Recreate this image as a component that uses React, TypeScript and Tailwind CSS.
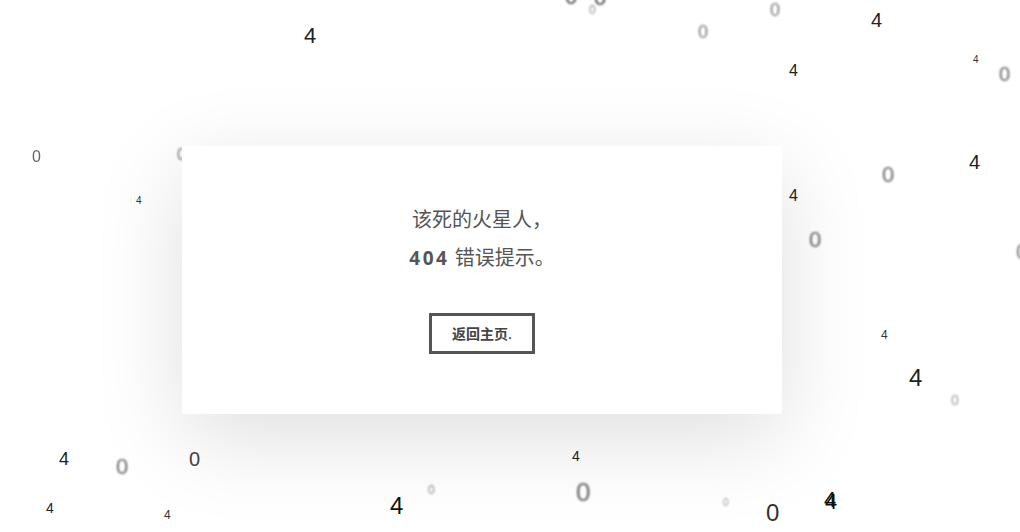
const digits: { t: string; c: string }[] = [
  { t: "4", c: "left-[304px] top-[25px] text-[22px] text-[#222]" },
  { t: "0", c: "left-[565px] top-[-14px] text-[22px] text-[#444] blur-[1px]" },
  { t: "0", c: "left-[589px] top-[4px] text-[12px] text-[#888] blur-[1px]" },
  { t: "0", c: "left-[594px] top-[-13px] text-[22px] text-[#444] blur-[1px]" },
  { t: "0", c: "left-[698px] top-[23px] text-[18px] text-[#777] blur-[1px]" },
  { t: "0", c: "left-[770px] top-[1px] text-[18px] text-[#777] blur-[1px]" },
  { t: "4", c: "left-[871px] top-[10px] text-[20px] text-[#222]" },
  { t: "4", c: "left-[789px] top-[63px] text-[16px] text-[#222]" },
  { t: "4", c: "left-[973px] top-[55px] text-[10px] text-[#333]" },
  { t: "0", c: "left-[999px] top-[64px] text-[20px] text-[#666] blur-[1px]" },
  { t: "0", c: "left-[32px] top-[149px] text-[16px] text-[#666] blur-[0.6px]" },
  { t: "0", c: "left-[177px] top-[147px] text-[16px] text-[#777] blur-[1px]" },
  { t: "4", c: "left-[136px] top-[196px] text-[10px] text-[#333]" },
  { t: "4", c: "left-[789px] top-[188px] text-[16px] text-[#222]" },
  { t: "0", c: "left-[882px] top-[164px] text-[22px] text-[#666] blur-[1px]" },
  { t: "4", c: "left-[969px] top-[152px] text-[20px] text-[#222]" },
  { t: "0", c: "left-[809px] top-[229px] text-[22px] text-[#666] blur-[1px]" },
  { t: "0", c: "left-[1016px] top-[241px] text-[22px] text-[#777] blur-[1px]" },
  { t: "4", c: "left-[881px] top-[329px] text-[12px] text-[#333]" },
  { t: "4", c: "left-[909px] top-[366px] text-[24px] text-[#222]" },
  { t: "0", c: "left-[951px] top-[393px] text-[14px] text-[#999] blur-[1px]" },
  { t: "4", c: "left-[59px] top-[450px] text-[18px] text-[#222]" },
  { t: "0", c: "left-[116px] top-[456px] text-[22px] text-[#666] blur-[1px]" },
  { t: "0", c: "left-[189px] top-[449px] text-[20px] text-[#444]" },
  { t: "4", c: "left-[572px] top-[449px] text-[14px] text-[#222]" },
  { t: "4", c: "left-[46px] top-[501px] text-[14px] text-[#222]" },
  { t: "4", c: "left-[164px] top-[509px] text-[12px] text-[#333]" },
  { t: "4", c: "left-[390px] top-[494px] text-[24px] text-[#111]" },
  { t: "0", c: "left-[428px] top-[484px] text-[12px] text-[#888] blur-[1px]" },
  { t: "0", c: "left-[576px] top-[479px] text-[26px] text-[#666] blur-[1px]" },
  { t: "0", c: "left-[723px] top-[498px] text-[10px] text-[#999] blur-[1px]" },
  { t: "0", c: "left-[766px] top-[501px] text-[24px] text-[#333]" },
  { t: "4", c: "left-[824px] top-[489px] text-[22px] text-[#111]" },
  { t: "4", c: "left-[825px] top-[491px] text-[22px] text-[#111]" },
];

export default function App() {
  return (
    <div className="relative h-[532px] w-full overflow-hidden bg-white font-['Liberation_Sans',sans-serif]">
      {/* falling 4s and 0s */}
      {digits.map((d, i) => (
        <span key={i} className={`absolute leading-none select-none ${d.c}`}>
          {d.t}
        </span>
      ))}

      <div className="relative z-10 pt-[146px] pl-[182px]">
        <div className="flex h-[268px] w-[600px] flex-col items-center bg-white pt-[55px] shadow-[0_24px_90px_rgba(0,0,0,0.13)] font-['Open_Sans','Noto_Sans_CJK_SC',sans-serif] text-[#555]">
          <p className="text-[20px] leading-[38px]">该死的火星人，</p>
          <p className="text-[20px] leading-[38px]">
            <span className="font-bold tracking-[2.5px] text-[19px]">404</span> 错误提示。
          </p>
          <button className="mt-[36px] h-[41px] w-[106px] border-[3px] border-[#555] text-[14px] font-semibold text-[#444]">
            返回主页.
          </button>
        </div>
      </div>
    </div>
  );
}
